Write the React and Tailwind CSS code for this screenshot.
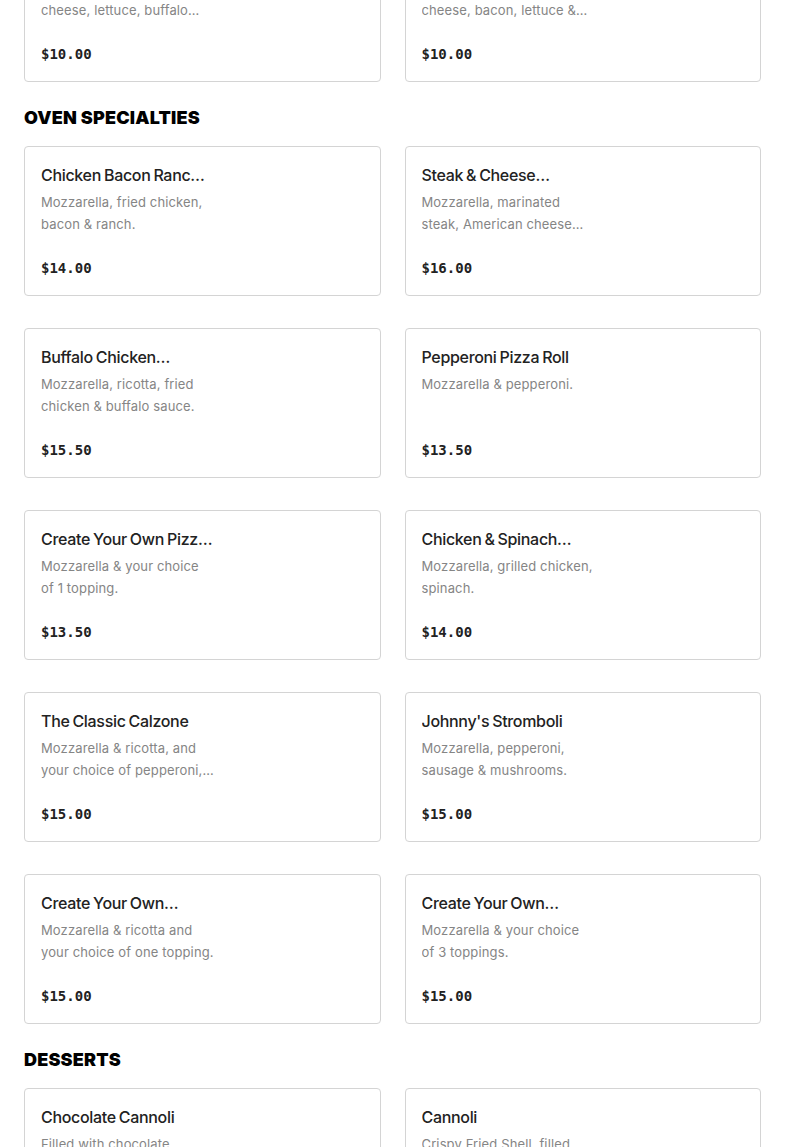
import React from 'react'

const sections = [
    {
        title: null,
        items: [
            { name: 'Buffalo Chicken Wrap', desc: 'Fried chicken, American cheese, lettuce, buffalo sauce & ranch.', price: '$10.00' },
            { name: 'Chicken Bacon Wrap', desc: 'Grilled chicken, American cheese, bacon, lettuce & tomato.', price: '$10.00' },
        ],
    },
    {
        title: 'Oven Specialties',
        items: [
            { name: 'Chicken Bacon Ranch Pizza Roll', desc: 'Mozzarella, fried chicken, bacon & ranch.', price: '$14.00' },
            { name: 'Steak & Cheese Stromboli', desc: 'Mozzarella, marinated steak, American cheese and onions.', price: '$16.00' },
            { name: 'Buffalo Chicken Calzone', desc: 'Mozzarella, ricotta, fried chicken & buffalo sauce.', price: '$15.50' },
            { name: 'Pepperoni Pizza Roll', desc: 'Mozzarella & pepperoni.', price: '$13.50' },
            { name: 'Create Your Own Pizza Roll', desc: 'Mozzarella & your choice of\u00a01 topping.', price: '$13.50' },
            { name: 'Chicken & Spinach Stromboli', desc: 'Mozzarella, grilled chicken, spinach.', price: '$14.00' },
            { name: 'The Classic Calzone', desc: 'Mozzarella & ricotta, and your choice of pepperoni, sausage or ham.', price: '$15.00' },
            { name: "Johnny's Stromboli", desc: 'Mozzarella, pepperoni, sausage & mushrooms.', price: '$15.00' },
            { name: 'Create Your Own Calzone', desc: 'Mozzarella & ricotta and your choice of one topping.', price: '$15.00' },
            { name: 'Create Your Own Stromboli', desc: 'Mozzarella & your choice of\u00a03 toppings.', price: '$15.00' },
        ],
    },
    {
        title: 'Desserts',
        items: [
            { name: 'Chocolate Cannoli', desc: 'Filled with chocolate cannoli cream.', price: '$5.00' },
            { name: 'Cannoli', desc: 'Crispy Fried Shell, filled with sweet ricotta cream.', price: '$4.50' },
        ],
    },
]

export default function App() {
    return (
        <div className="w-full h-[1147px] overflow-hidden bg-white px-6" style={{ fontFamily: 'Inter, "Noto Sans", sans-serif' }}>
            <div className="-mt-[68px]">
                {sections.map((section, index) => (
                    <Section key={index} section={section}></Section>
                ))}
            </div>
        </div>
    )
}

function Section(props) {
    const { section } = props
    return <div>
        {section.title &&
            <h2 className="mt-[22px] mb-[14px] h-7 leading-7 text-[18px] font-black uppercase text-black tracking-[0.01em]">
                {section.title}
            </h2>
        }
        <div className="grid grid-cols-2 gap-x-6 gap-y-8">
            {section.items.map((item, index) => (
                <MenuCard key={index} item={item}></MenuCard>
            ))}
        </div>
    </div>
}

function MenuCard(props) {
    const { item } = props
    return <div className="border border-[#d4d4d4] rounded-[4px] bg-white px-4 pt-4 pb-[15px]">
        <p className="w-[172px] text-[16px] leading-6 font-medium text-[#222] tracking-[-0.02em] [word-spacing:-1px] line-clamp-1 break-words">{item.name}</p>
        <p className="w-[176px] mt-1 h-[44px] text-[13px] leading-[22px] text-[#858585] line-clamp-2 tracking-[0.01em]">{item.desc}</p>
        <p className="mt-[21px] text-[14px] leading-6 font-bold text-[#222]" style={{ fontFamily: '"DejaVu Sans Mono", "Liberation Mono", monospace' }}>{item.price}</p>
    </div>
}
